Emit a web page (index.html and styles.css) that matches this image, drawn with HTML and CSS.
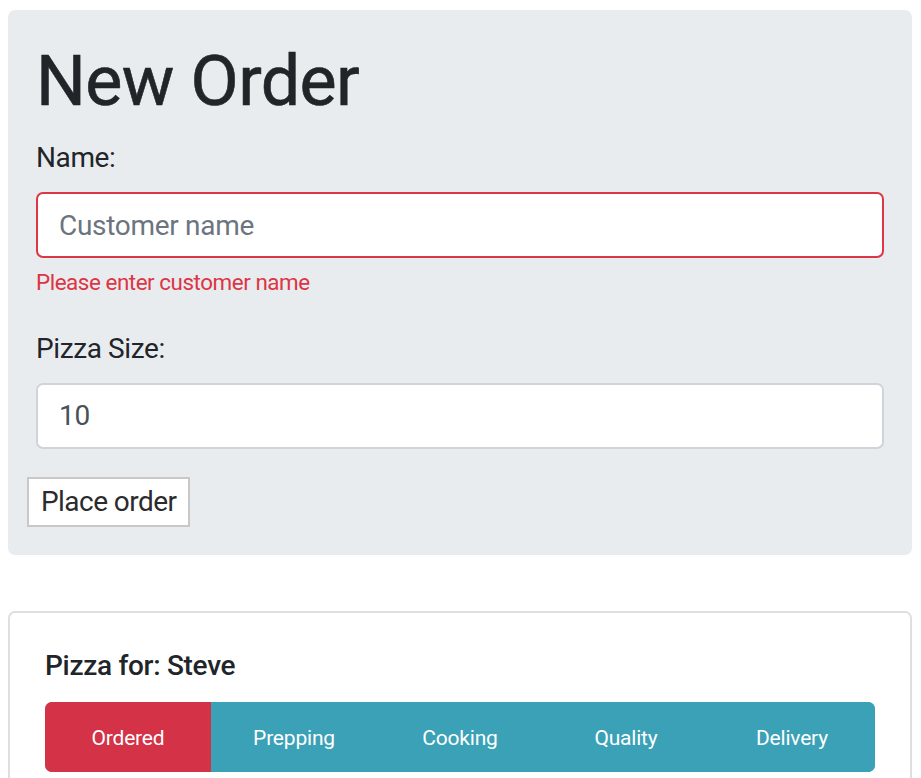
FILE: index.html
```html
<!DOCTYPE html>
<html lang="en">
<head>
<meta charset="utf-8">
<title>New Order</title>
<link rel="stylesheet" href="styles.css">
</head>
<body>
<div class="jumbotron">
  <h1 class="title">New Order</h1>
  <div class="form-group">
    <label class="label" for="name">Name:</label>
    <input id="name" class="form-control is-invalid" type="text" placeholder="Customer name">
    <div class="invalid-feedback">Please enter customer name</div>
  </div>
  <div class="form-group">
    <label class="label" for="size">Pizza Size:</label>
    <input id="size" class="form-control" type="text" value="10">
  </div>
  <button class="btn-place" type="button">Place order</button>
</div>
<div class="card">
  <div class="card-body">
    <h5 class="card-title">Pizza for: Steve</h5>
    <div class="progress">
      <div class="step step-active">Ordered</div>
      <div class="step">Prepping</div>
      <div class="step">Cooking</div>
      <div class="step">Quality</div>
      <div class="step">Delivery</div>
    </div>
  </div>
</div>
</body>
</html>
```
FILE: styles.css
```css
html, body {
  background: #ffffff;
}
body {
  margin: 10px 9px 0 8px;
  font-family: Roboto, "Liberation Sans", Arial, sans-serif;
  font-size: 28px;
  line-height: 1.5;
  color: #212529;
}
.jumbotron {
  background: #e9ecef;
  border-radius: 7px;
  padding: 28px 28px 28px 28px;
}
.title {
  margin: 0 0 14px 0;
  padding-top: 1px;
  font-size: 70px;
  font-weight: 400;
  line-height: 84px;
  letter-spacing: -0.6px;
  color: #212529;
  -webkit-text-stroke: 0.6px #212529;
}
.form-group {
  margin-bottom: 28px;
}
.label {
  display: inline-block;
  margin-bottom: 13px;
  line-height: 42px;
  letter-spacing: -0.4px;
}
.form-control {
  display: block;
  box-sizing: border-box;
  width: 100%;
  height: 66px;
  margin: 0;
  padding: 0 21px;
  font-family: inherit;
  font-size: 28px;
  letter-spacing: -0.3px;
  color: #495057;
  background: #ffffff;
  border: 2px solid #ced4da;
  border-radius: 7px;
  outline: none;
}
.form-control::placeholder {
  color: #6c757d;
  opacity: 1;
}
.form-control.is-invalid {
  border-color: #dc3545;
}
.invalid-feedback {
  margin-top: 7px;
  padding-top: 1px;
  font-size: 22.4px;
  line-height: 33.6px;
  letter-spacing: -0.45px;
  color: #dc3545;
}
.btn-place {
  display: block;
  margin: 0 0 0 -9px;
  height: 50px;
  padding: 0 12px;
  font-family: inherit;
  font-size: 28px;
  letter-spacing: -0.55px;
  color: #2b2b2b;
  background: #ffffff;
  border: 2px solid #c8c8c8;
  border-radius: 0;
}
.card {
  margin-top: 56px;
  border: 2px solid #dfdfdf;
  border-radius: 7px;
  background: #ffffff;
}
.card-body {
  padding: 35px 35px 35px 35px;
}
.card-title {
  margin: 0 0 20px 0;
  padding-top: 1px;
  font-size: 28px;
  font-weight: 500;
  line-height: 33.6px;
  letter-spacing: -0.3px;
}
.progress {
  display: flex;
  height: 70px;
  border-radius: 7px;
  overflow: hidden;
  background: #3aa1b7;
}
.step {
  flex: 1 1 0;
  display: flex;
  align-items: center;
  justify-content: center;
  padding-top: 4px;
  font-size: 21px;
  color: #ffffff;
  background: #3aa1b7;
  letter-spacing: -0.2px;
}
.step-active {
  background: #d33247;
}
```
